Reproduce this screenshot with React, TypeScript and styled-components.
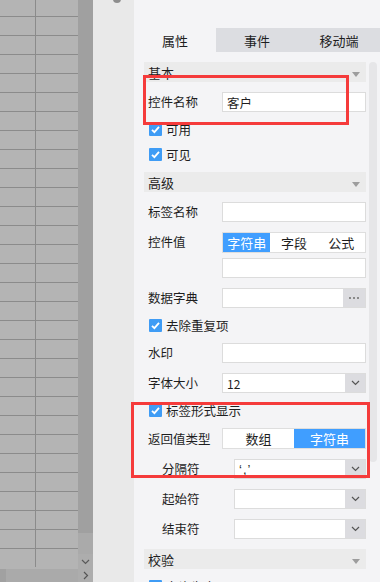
import React from 'react'
import styled, { createGlobalStyle } from 'styled-components'

const GlobalStyle = createGlobalStyle`
  html, body { margin: 0; padding: 0; }
  body {
    font-family: "Noto Sans CJK SC", "Noto Sans", sans-serif;
    color: #1e1e1e;
  }
`

const Screen = styled.div`
  position: relative;
  width: 380px;
  height: 582px;
  overflow: hidden;
  display: flex;
  background: #e9e9e9;
`

/* ---- spreadsheet on the left ---- */
const Sheet = styled.div`
  width: 93px;
  flex-shrink: 0;
  display: flex;
  flex-direction: column;
`

const SheetBody = styled.div`
  height: 569px;
  display: flex;
`

const Cells = styled.div`
  width: 78px;
  background: #b4b4b4;
  overflow: hidden;
  display: flex;
  flex-direction: column;
`

const CellRow = styled.div<{ $first?: boolean }>`
  flex-shrink: 0;
  display: flex;
  height: ${p => (p.$first ? 16 : 18)}px;
  border-top: ${p => (p.$first ? 'none' : '1px solid #8b8b8b')};
`

const Cell = styled.div<{ $narrow?: boolean }>`
  flex: ${p => (p.$narrow ? '0 0 35px' : '1')};
  border-right: ${p => (p.$narrow ? '1px solid #8b8b8b' : 'none')};
`

const VScroll = styled.div`
  width: 15px;
  display: flex;
  flex-direction: column;
  background: #aaaaaa;
`

const VThumb = styled.div`
  height: 533px;
  background: #a0a0a0;
`

const Spacer = styled.div`
  flex: 1;
`

const ScrollArrow = styled.div<{ $h?: number }>`
  width: 15px;
  height: ${p => p.$h ?? 15}px;
  display: flex;
  align-items: center;
  justify-content: center;
  background: #adadad;
`

const HScroll = styled.div`
  height: 13px;
  display: flex;
  background: #aaaaaa;
`

const HThumb = styled.div`
  width: 6px;
  background: #a1a1a1;
`

/* ---- gap column ---- */
const Gutter = styled.div`
  width: 41px;
  flex-shrink: 0;
  background: #e9e9e9;
`

const Knob = styled.div`
  width: 8px;
  height: 8px;
  margin: -5px 0 0 20px;
  border-radius: 50%;
  background: #8e8e8e;
`

/* ---- property panel ---- */
const Panel = styled.div`
  position: relative;
  flex: 1;
  background: #f4f4f6;
  display: flex;
  flex-direction: column;
  overflow: hidden;
`

const PanelTop = styled.div`
  height: 28px;
  flex-shrink: 0;
`

const Tabs = styled.div`
  height: 24px;
  flex-shrink: 0;
  display: grid;
  grid-template-columns: repeat(3, 1fr);
`

const Tab = styled.div<{ $active?: boolean }>`
  display: flex;
  align-items: center;
  justify-content: center;
  font-size: 13px;
  background: ${p => (p.$active ? '#f4f4f6' : '#dcdde1')};
`

const Content = styled.div`
  padding: 10px 14px 0 10px;
  display: flex;
  flex-direction: column;
  gap: 10px;
`

const SectionHeader = styled.div`
  height: 20px;
  flex-shrink: 0;
  display: flex;
  align-items: center;
  justify-content: space-between;
  padding: 0 6px 0 4px;
  background: #ebebeb;
  font-size: 13px;
`

const Caret = styled.svg`
  margin-top: 5px;
`

const FieldRow = styled.div<{ $top?: boolean }>`
  display: flex;
  align-items: ${p => (p.$top ? 'flex-start' : 'center')};
  min-height: 20px;
  flex-shrink: 0;
`

const Label = styled.div<{ $indent?: boolean }>`
  flex: 0 0 ${p => (p.$indent ? 90 : 78)}px;
  box-sizing: border-box;
  padding-left: ${p => (p.$indent ? 18 : 4)}px;
  font-size: 12.5px;
  line-height: 20px;
`

const Control = styled.div`
  flex: 1;
  display: flex;
  flex-direction: column;
  gap: 5px;
  min-width: 0;
`

const TextBox = styled.div`
  height: 20px;
  box-sizing: border-box;
  border: 1px solid #dcdcdc;
  background: #fff;
  padding: 0 4px;
  display: flex;
  align-items: center;
  font-size: 12.5px;
`

const Combo = styled.div`
  height: 20px;
  box-sizing: border-box;
  border: 1px solid #dcdcdc;
  background: #fff;
  display: flex;
`

const ComboText = styled.div<{ $latin?: boolean }>`
  flex: 1;
  padding: 0 4px;
  display: flex;
  align-items: center;
  font-size: ${p => (p.$latin ? 13 : 12)}px;
  font-family: ${p => (p.$latin ? '"Liberation Sans", sans-serif' : 'inherit')};
  letter-spacing: ${p => (p.$latin ? '1px' : 'normal')};
`

const ComboButton = styled.div<{ $w?: number }>`
  width: ${p => p.$w ?? 20}px;
  display: flex;
  align-items: center;
  justify-content: center;
  gap: 2px;
  background: #dcdce0;
`

const Dot = styled.span`
  width: 2px;
  height: 2px;
  background: #8a8a8a;
`

const Segmented = styled.div`
  height: 21px;
  box-sizing: border-box;
  border: 1px solid #dedede;
  background: #fff;
  display: flex;
`

const Segment = styled.div<{ $active?: boolean }>`
  flex: 1;
  display: flex;
  align-items: center;
  justify-content: center;
  font-size: 13px;
  background: ${p => (p.$active ? '#409eff' : 'transparent')};
  color: ${p => (p.$active ? '#fff' : '#1e1e1e')};
`

const CheckRow = styled.div`
  height: 15px;
  flex-shrink: 0;
  display: flex;
  align-items: center;
  gap: 4px;
  padding-left: 5px;
  font-size: 12.5px;
`

const Box = styled.span`
  width: 13px;
  height: 13px;
  border-radius: 1px;
  background: #3f9cf5;
  display: flex;
  align-items: center;
  justify-content: center;
`

const PanelScroll = styled.div`
  position: absolute;
  top: 62px;
  right: 3px;
  width: 8px;
  height: 400px;
  border-radius: 4px;
  background: #e6e6e8;
`

const Highlight = styled.div<{ $x: number; $y: number; $w: number; $h: number }>`
  position: absolute;
  left: ${p => p.$x}px;
  top: ${p => p.$y}px;
  width: ${p => p.$w}px;
  height: ${p => p.$h}px;
  box-sizing: border-box;
  border: 3px solid #f53b3b;
  pointer-events: none;
`

const ChevronDown = ({ color = '#555' }: { color?: string }) => (
  <svg width="9" height="6" viewBox="0 0 9 6">
    <path d="M1 1 L4.5 4.5 L8 1" fill="none" stroke={color} strokeWidth="1.2" />
  </svg>
)

const ChevronRight = () => (
  <svg width="6" height="9" viewBox="0 0 6 9">
    <path d="M1 1 L4.5 4.5 L1 8" fill="none" stroke="#555" strokeWidth="1.2" />
  </svg>
)

const Check = ({ label }: { label: string }) => (
  <CheckRow>
    <Box>
      <svg width="11" height="11" viewBox="0 0 11 11">
        <path d="M2 5.8 L4.4 8.2 L9 2.8" fill="none" stroke="#fff" strokeWidth="1.8" />
      </svg>
    </Box>
    {label}
  </CheckRow>
)

const Section = ({ title }: { title: string }) => (
  <SectionHeader>
    {title}
    <Caret width="8" height="5" viewBox="0 0 8 5">
      <path d="M0 0 L8 0 L4 5 Z" fill="#9d9d9d" />
    </Caret>
  </SectionHeader>
)

const Select = ({ value = '', latin }: { value?: string; latin?: boolean }) => (
  <Combo>
    <ComboText $latin={latin}>{value}</ComboText>
    <ComboButton>
      <ChevronDown />
    </ComboButton>
  </Combo>
)

export default function App() {
  const rows = Array.from({ length: 30 }, (_, i) => i)

  return (
    <Screen>
      <GlobalStyle />
      <Sheet>
        <SheetBody>
          <Cells>
            {rows.map(i => (
              <CellRow key={i} $first={i === 0}>
                <Cell $narrow />
                <Cell />
              </CellRow>
            ))}
          </Cells>
          <VScroll>
            <VThumb />
            <Spacer />
            <ScrollArrow>
              <ChevronDown color="#5a5a5a" />
            </ScrollArrow>
          </VScroll>
        </SheetBody>
        <HScroll>
          <HThumb />
          <Spacer />
          <ScrollArrow $h={13}>
            <ChevronRight />
          </ScrollArrow>
        </HScroll>
      </Sheet>

      <Gutter>
        <Knob />
      </Gutter>

      <Panel>
        <PanelTop />
        <Tabs>
          <Tab $active>属性</Tab>
          <Tab>事件</Tab>
          <Tab>移动端</Tab>
        </Tabs>
        <Content>
          <Section title="基本" />
          <FieldRow>
            <Label>控件名称</Label>
            <Control>
              <TextBox>客户</TextBox>
            </Control>
          </FieldRow>
          <Check label="可用" />
          <Check label="可见" />

          <Section title="高级" />
          <FieldRow>
            <Label>标签名称</Label>
            <Control>
              <TextBox />
            </Control>
          </FieldRow>
          <FieldRow $top>
            <Label>控件值</Label>
            <Control>
              <Segmented>
                <Segment $active>字符串</Segment>
                <Segment>字段</Segment>
                <Segment>公式</Segment>
              </Segmented>
              <TextBox />
            </Control>
          </FieldRow>
          <FieldRow>
            <Label>数据字典</Label>
            <Control>
              <Combo>
                <ComboText />
                <ComboButton $w={22}>
                  <Dot />
                  <Dot />
                  <Dot />
                </ComboButton>
              </Combo>
            </Control>
          </FieldRow>
          <Check label="去除重复项" />
          <FieldRow>
            <Label>水印</Label>
            <Control>
              <TextBox />
            </Control>
          </FieldRow>
          <FieldRow>
            <Label>字体大小</Label>
            <Control>
              <Select value="12" />
            </Control>
          </FieldRow>
          <Check label="标签形式显示" />
          <FieldRow>
            <Label>返回值类型</Label>
            <Control>
              <Segmented>
                <Segment>数组</Segment>
                <Segment $active>字符串</Segment>
              </Segmented>
            </Control>
          </FieldRow>
          <FieldRow>
            <Label $indent>分隔符</Label>
            <Control>
              <Select value="‘,’" latin />
            </Control>
          </FieldRow>
          <FieldRow>
            <Label $indent>起始符</Label>
            <Control>
              <Select />
            </Control>
          </FieldRow>
          <FieldRow>
            <Label $indent>结束符</Label>
            <Control>
              <Select />
            </Control>
          </FieldRow>

          <Section title="校验" />
          <Check label="允许为空" />
        </Content>
        <PanelScroll />
      </Panel>

      <Highlight $x={143} $y={75} $w={206} $h={50} />
      <Highlight $x={131} $y={402} $w={239} $h={76} />
    </Screen>
  )
}
